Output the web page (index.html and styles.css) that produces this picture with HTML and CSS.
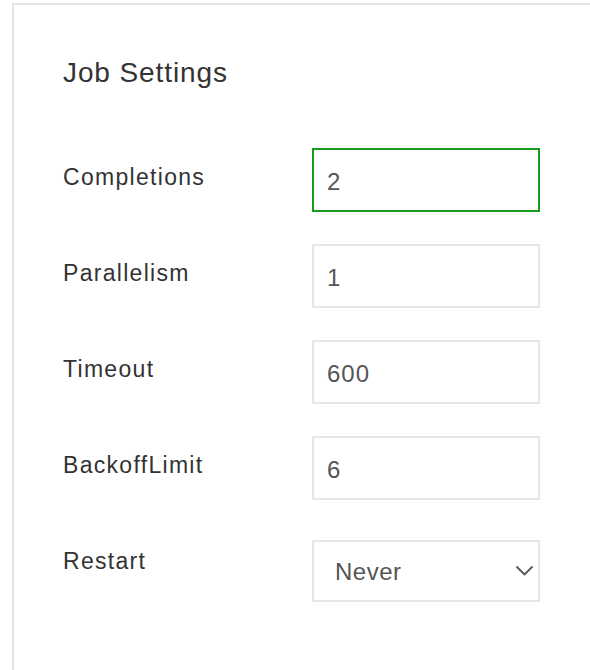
FILE: index.html
```html
<!DOCTYPE html>
<html>
<head>
<meta charset="utf-8">
<link rel="stylesheet" href="styles.css">
</head>
<body>
<div class="panel">
  <h2 class="title">Job Settings</h2>
  <div class="rows">
    <div class="row">
      <label class="label">Completions</label>
      <div class="field active">2</div>
    </div>
    <div class="row">
      <label class="label">Parallelism</label>
      <div class="field">1</div>
    </div>
    <div class="row">
      <label class="label">Timeout</label>
      <div class="field">600</div>
    </div>
    <div class="row">
      <label class="label">BackoffLimit</label>
      <div class="field">6</div>
    </div>
    <div class="row">
      <label class="label">Restart</label>
      <div class="field select">
        <span class="sel-text">Never</span>
        <svg class="chev" width="19" height="11" viewBox="0 0 19 11"><path d="M1.5 1.5 L9.5 9.5 L17.5 1.5" fill="none" stroke="#555" stroke-width="1.8"/></svg>
      </div>
    </div>
  </div>
</div>
</body>
</html>
```
FILE: styles.css
```css
html, body {
  margin: 0;
  padding: 0;
  background: #fff;
  overflow: hidden;
}
body {
  font-family: "Liberation Sans", Arial, sans-serif;
  color: #333;
  padding: 3px 0 0 12px;
  height: 670px;
  box-sizing: border-box;
}
.panel {
  border-top: 2px solid #e5e5e5;
  border-left: 2px solid #e5e5e5;
  height: 100%;
  box-sizing: border-box;
  padding: 0 0 0 49px;
}
.title {
  margin: 0;
  padding-top: 51px;
  font-size: 28px;
  font-weight: normal;
  letter-spacing: 0.9px;
  line-height: 34px;
}
.rows {
  margin-top: 58px;
  display: flex;
  flex-direction: column;
  gap: 32px;
}
.row {
  display: flex;
  align-items: flex-start;
}
.label {
  width: 249px;
  font-size: 23px;
  letter-spacing: 1.3px;
  line-height: 26px;
  padding-top: 16px;
}
.field {
  box-sizing: border-box;
  width: 228px;
  height: 64px;
  border: 2px solid #e6e6e6;
  font-size: 24px;
  color: #555;
  padding-left: 13px;
  padding-top: 4px;
  display: flex;
  align-items: center;
  letter-spacing: 1px;
}
.field.active {
  border-color: #1a9a1a;
}
.select {
  margin-top: 8px;
  height: 62px;
  justify-content: space-between;
  padding-left: 21px;
  padding-right: 4px;
  padding-top: 2px;
  letter-spacing: 0.5px;
}
.chev {
  margin-top: -4px;
}
```
